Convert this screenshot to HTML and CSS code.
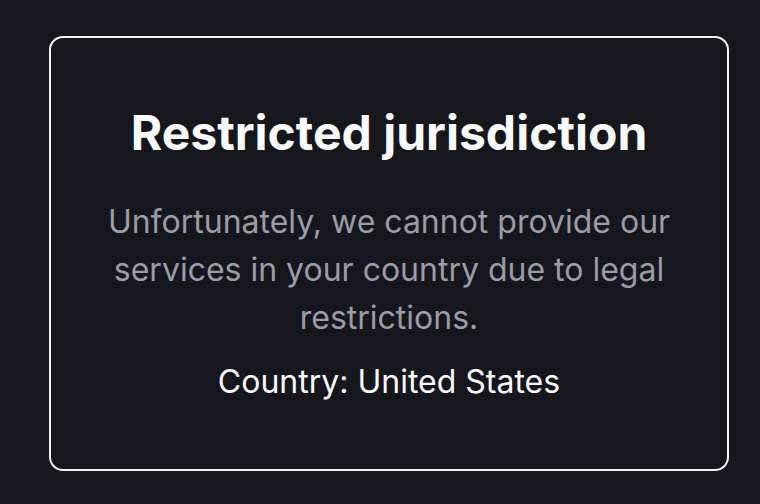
FILE: index.html
```html
<!DOCTYPE html>
<html lang="en">
<head>
<meta charset="utf-8">
<title>Restricted jurisdiction</title>
<link rel="stylesheet" href="styles.css">
</head>
<body>
<main class="card">
  <h1 class="title">Restricted jurisdiction</h1>
  <p class="message">Unfortunately, we cannot provide our services in your country due to legal restrictions.</p>
  <p class="country">Country: United States</p>
</main>
</body>
</html>
```
FILE: styles.css
```css
html, body {
  margin: 0;
  background: #16171c;
}
body {
  padding: 36px 31px 0 49px;
  font-family: Inter, "Noto Sans", sans-serif;
  height: 504px;
  box-sizing: border-box;
}
.card {
  box-sizing: border-box;
  width: 680px;
  height: 435px;
  border: 2px solid #f4f4f6;
  border-radius: 14px;
  padding: 67px 40px 0;
  display: flex;
  flex-direction: column;
  align-items: center;
  text-align: center;
}
.title {
  margin: 0;
  font-size: 48px;
  line-height: 56px;
  font-weight: 700;
  color: #f8f9fb;
}
.message {
  margin: 37px 0 0;
  font-size: 32px;
  line-height: 48px;
  color: #9a9ca6;
  max-width: 590px;
}
.country {
  margin: 16px 0 0;
  font-size: 32px;
  line-height: 48px;
  color: #f8f9fb;
}
```
